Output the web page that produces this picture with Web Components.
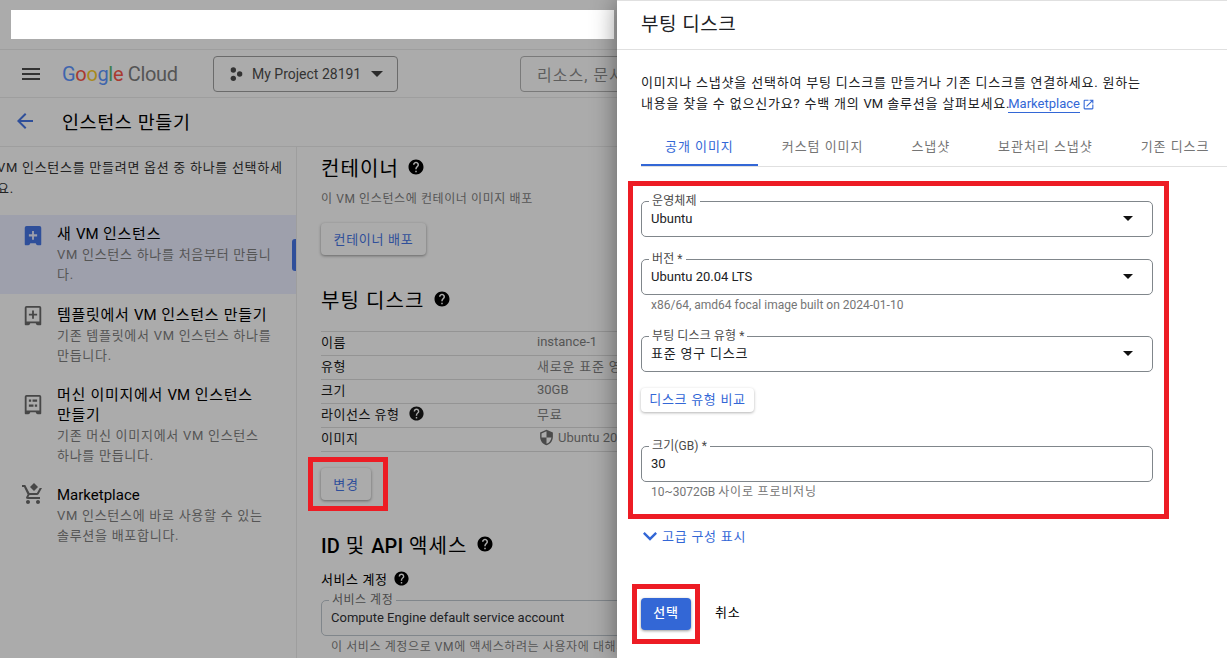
<!DOCTYPE html>
<html lang="ko">
<head>
<meta charset="utf-8">
<title>부팅 디스크</title>
<style>
  html, body { margin: 0; height: 100%; }
  body {
    width: 1227px;
    height: 658px;
    overflow: hidden;
    position: relative;
    display: flex;
    font-family: Roboto, "Noto Sans CJK KR", sans-serif;
    font-size: 13px;
    color: #000;
    background: #ababab;
  }
  /* latin runs keep their natural width, hangul needs a bit of tracking */
  .l { letter-spacing: 0; }
  .b { letter-spacing: 0; font-weight: 500; }
  .ko { letter-spacing: .8px; }
</style>
</head>
<body>

<gc-console>
  <gc-nav-item slot="nav" icon="vm" selected style="--it:2px">
    <span slot="title">새 <span class="l">VM</span> 인스턴스</span>
    VM 인스턴스 하나를 처음부터 만듭니<br>다.
  </gc-nav-item>
  <gc-nav-item slot="nav" icon="template" style="--it:1px">
    <span slot="title">템플릿에서 <span class="l">VM</span> 인스턴스 만들기</span>
    기존 템플릿에서 VM 인스턴스 하나를<br>만듭니다.
  </gc-nav-item>
  <gc-nav-item slot="nav" icon="image" style="--it:10px">
    <span slot="title">머신 이미지에서 <span class="l">VM</span> 인스턴스<br>만들기</span>
    기존 머신 이미지에서 VM 인스턴스<br>하나를 만듭니다.
  </gc-nav-item>
  <gc-nav-item slot="nav" icon="cart" style="--it:-2px">
    <span slot="title"><span class="l">Marketplace</span></span>
    VM 인스턴스에 바로 사용할 수 있는<br>솔루션을 배포합니다.
  </gc-nav-item>

  <gc-heading>컨테이너</gc-heading>
  <gc-note>이 VM 인스턴스에 컨테이너 이미지 배포</gc-note>
  <gc-button style="margin-top:14px;--w:105px">컨테이너 배포</gc-button>

  <gc-heading style="margin-top:30px">부팅 디스크</gc-heading>
  <gc-table style="margin-top:16px">
    <gc-row label="이름">instance-1</gc-row>
    <gc-row label="유형"><span class="ko">새로운 표준 영구 디스크</span></gc-row>
    <gc-row label="크기">30GB</gc-row>
    <gc-row label="라이선스 유형" help><span class="ko">무료</span></gc-row>
    <gc-row label="이미지"><gc-icon name="shield" size="17" style="color:#4a4a4a;margin:0 3px 0 1px"></gc-icon>Ubuntu 20.04 LTS</gc-row>
  </gc-table>
  <gc-button style="margin-top:16px;--w:50px">변경</gc-button>

  <gc-heading style="margin-top:30px"><span class="b">ID</span> 및 <span class="b">API</span> 액세스</gc-heading>
  <gc-label style="margin-top:9px">서비스 계정</gc-label>
  <gc-field style="margin-top:11px;width:420px;--notch:#ababab;--ls:.5px" label="서비스 계정" value="Compute Engine default service account"></gc-field>
  <gc-hint dim>이 서비스 계정으로 VM에 액세스하려는 사용자에 대해서는<br>이 권한 설정</gc-hint>
</gc-console>

<disk-panel>
  <span slot="title">부팅 디스크</span>

  이미지나 스냅샷을 선택하여 부팅 디스크를 만들거나 기존 디스크를 연결하세요. 원하는<br>
  내용을 찾을 수 없으신가요? 수백 개의 <span class="l">VM</span> 솔루션을 살펴보세요.<gc-link>Marketplace</gc-link>

  <gc-tab slot="tabs" active>공개 이미지</gc-tab>
  <gc-tab slot="tabs">커스텀 이미지</gc-tab>
  <gc-tab slot="tabs">스냅샷</gc-tab>
  <gc-tab slot="tabs">보관처리 스냅샷</gc-tab>
  <gc-tab slot="tabs">기존 디스크</gc-tab>

  <gc-field slot="form" style="margin-top:34px" label="운영체제" value="Ubuntu" select></gc-field>
  <gc-field slot="form" style="margin-top:22px" label="버전 *" value="Ubuntu 20.04 LTS" select></gc-field>
  <gc-hint slot="form">x86/64, amd64 focal image built on 2024-01-10</gc-hint>
  <gc-field slot="form" style="margin-top:21px;--vs:.8px;--vb:3px" label="부팅 디스크 유형 *" value="표준 영구 디스크" select></gc-field>
  <gc-button slot="form" light style="margin-top:16px;--w:113px;--h:24px">디스크 유형 비교</gc-button>
  <gc-field slot="form" style="margin-top:34px" label="크기(GB) *" value="30"></gc-field>
  <gc-hint slot="form">10~3072GB <span class="ko">사이로 프로비저닝</span></gc-hint>

  <gc-expander slot="form">고급 구성 표시</gc-expander>

  <gc-button slot="actions" primary style="--w:50px">선택</gc-button>
  <span slot="actions" class="ko" style="padding-bottom:5px">취소</span>
</disk-panel>

<red-box style="left:628px;top:181px;width:541px;height:338px"></red-box>
<red-box style="left:632px;top:584px;width:68px;height:60px"></red-box>
<red-box style="left:308px;top:457px;width:80px;height:54px"></red-box>

<script>
  const ICONS = {
    menu: '<path d="M3 18h18v-2H3v2zm0-5h18v-2H3v2zm0-7v2h18V6H3z"/>',
    back: '<path d="M20 11H7.83l5.59-5.59L12 4l-8 8 8 8 1.41-1.41L7.83 13H20v-2z"/>',
    help: '<path d="M12 2C6.48 2 2 6.48 2 12s4.48 10 10 10 10-4.48 10-10S17.52 2 12 2zm1 17h-2v-2h2v2zm2.07-7.75l-.9.92C13.45 12.9 13 13.5 13 15h-2v-.5c0-1.1.45-2.1 1.17-2.83l1.24-1.26c.37-.36.59-.86.59-1.41 0-1.1-.9-2-2-2s-2 .9-2 2H8c0-2.21 1.79-4 4-4s4 1.79 4 4c0 .88-.36 1.68-.93 2.25z"/>',
    shield: '<path d="M12 1L3 5v6c0 5.55 3.84 10.74 9 12 5.16-1.26 9-6.45 9-12V5l-9-4zm0 10.99h7c-.53 4.12-3.28 7.79-7 8.94V12H5V6.3l7-3.11v8.8z"/>',
    open: '<path d="M19 19H5V5h7V3H5a2 2 0 0 0-2 2v14a2 2 0 0 0 2 2h14c1.1 0 2-.9 2-2v-7h-2v7zM14 3v2h3.59l-9.83 9.83 1.41 1.41L19 6.41V10h2V3h-7z"/>',
    chevron: '<path d="M7.41 8.59L12 13.17l4.59-4.58L18 10l-6 6-6-6z"/>',
    project: '<circle cx="8" cy="6" r="4"/><circle cx="17.5" cy="12" r="4"/><circle cx="8" cy="18.500" r="4"/>',
    vm: '<path fill-rule="evenodd" d="M5 1h14a2 2 0 0 1 2 2v18a1 1 0 0 1-1 1h-3a2 2 0 0 1-2-2H9a2 2 0 0 1-2 2H4a1 1 0 0 1-1-1V3a2 2 0 0 1 2-2zm6 5.500v3.500H7.500v2.500H11V16h2v-3.500h3.500V10H13V6.500z"/>',
    template: '<path fill-rule="evenodd" d="M5 1h14a2 2 0 0 1 2 2v18a1 1 0 0 1-1 1h-3a2 2 0 0 1-2-2H9a2 2 0 0 1-2 2H4a1 1 0 0 1-1-1V3a2 2 0 0 1 2-2zm0 2v15h14V3zm6 3h2v3.500h3.500v2H13V15h-2v-3.500H7.500v-2H11z"/>',
    image: '<path fill-rule="evenodd" d="M5 1h14a2 2 0 0 1 2 2v18a1 1 0 0 1-1 1h-3a2 2 0 0 1-2-2H9a2 2 0 0 1-2 2H4a1 1 0 0 1-1-1V3a2 2 0 0 1 2-2zm0 2v15h14V3zm2.500 3H10v2.500H7.500zm4 0h5v2.500h-5zm-4 5.500h5V14h-5zm6.500 0h2.500V14H14z"/>',
    cart: '<path d="M7 18c-1.100 0-1.990.9-1.990 2S5.900 22 7 22s2-.9 2-2-.9-2-2-2zm10 0c-1.100 0-1.990.9-1.990 2s.89 2 1.990 2 2-.9 2-2-.9-2-2-2zM1 3v2h2l3.600 7.590-1.350 2.440C4.520 16.370 5.480 17 7 17h12v-2H7.400l1.100-2h7.450c.75 0 1.410-.41 1.750-1.030L21 6h-2.300l-2.750 5H8.500L4.270 3z"/><path d="M13 1l4 4-4 4-4-4z"/>'
  };

  class GcIcon extends HTMLElement {
    constructor() {
      super();
      const size = this.getAttribute("size") || 24;
      this.attachShadow({ mode: "open" }).innerHTML = `
        <style>
          :host { display: inline-flex; flex: none; vertical-align: middle; }
          svg { display: block; fill: currentColor; }
        </style>
        <svg width="${size}" height="${size}" viewBox="0 0 24 24">${ICONS[this.getAttribute("name")] || ""}</svg>`;
    }
  }
  customElements.define("gc-icon", GcIcon);

  class GcConsole extends HTMLElement {
    constructor() {
      super();
      this.attachShadow({ mode: "open" }).innerHTML = `
        <style>
          :host { display: flex; flex-direction: column; width: 617px; height: 658px; overflow: hidden; flex: none; }
          .strip { flex: none; height: 39px; border-bottom: 1px solid #9e9e9e; padding: 10px 0 0 11px; }
          .strip div { width: 603px; height: 29px; background: #fff; }
          .bar { height: 47px; flex: none; display: flex; align-items: center; border-bottom: 1px solid #9e9e9e; white-space: nowrap; }
          .menu { margin-left: 19px; color: #333; }
          .logo { margin-left: 19px; width: 116px; flex: none; font-size: 20px; letter-spacing: -.33px; color: #555; }
          .project {
            margin-left: 35px; width: 185px; height: 36px; box-sizing: border-box; flex: none;
            border: 1px solid #6b6b6b; border-radius: 4px; display: flex; align-items: center;
            padding-left: 14px; font-size: 14px; color: #333;
          }
          .project span { margin-left: 8px; width: 119px; flex: none; }
          .arrow { width: 0; height: 0; border: 6px solid transparent; border-top-color: #2b2b2b; border-bottom: 0; }
          .search {
            margin-left: 122px; width: 500px; height: 36px; box-sizing: border-box; flex: none;
            border: 1px solid #7a7a7a; border-radius: 4px; padding-left: 16px;
            display: flex; align-items: center; font-size: 16px; letter-spacing: 1px; color: #5e5e5e;
          }
          .title { flex: none; display: flex; align-items: center; border-bottom: 1px solid #9e9e9e; box-sizing: border-box; height: 49px; padding-bottom: 3px; font-size: 18.5px; letter-spacing: .6px; white-space: nowrap; }
          .title gc-icon { margin: 0 25px 0 13px; color: #2f4f9a; }
          .cols { flex: 1; display: flex; min-height: 0; }
          .side { width: 296px; flex: none; border-right: 1px solid #9e9e9e; overflow: hidden; }
          .intro { margin: 10px 0 16px -3px; line-height: 21px; letter-spacing: .72px; color: #222; white-space: nowrap; }
          .main { padding: 6px 0 0 24px; width: 500px; flex: none; }
        </style>
        <div class="strip"><div></div></div>
        <div class="bar">
          <gc-icon class="menu" name="menu" size="24"></gc-icon>
          <div class="logo"><span style="color:#3f65ad">G</span><span style="color:#a93a30">o</span><span style="color:#a8891c">o</span><span style="color:#3f65ad">g</span><span style="color:#3d7d4a">l</span><span style="color:#a93a30">e</span> Cloud</div>
          <div class="project"><gc-icon name="project" size="16"></gc-icon><span>My Project 28191</span><div class="arrow"></div></div>
          <div class="search">리소스, 문서, 제품 등 검색</div>
        </div>
        <div class="title"><gc-icon name="back" size="24"></gc-icon>인스턴스 만들기</div>
        <div class="cols">
          <div class="side">
            <div class="intro">VM 인스턴스를 만들려면 옵션 중 하나를 선택하세<br>요.</div>
            <slot name="nav"></slot>
          </div>
          <div class="main"><slot></slot></div>
        </div>`;
    }
  }
  customElements.define("gc-console", GcConsole);

  class GcNavItem extends HTMLElement {
    constructor() {
      super();
      const selected = this.hasAttribute("selected");
      this.attachShadow({ mode: "open" }).innerHTML = `
        <style>
          :host { display: flex; position: relative; padding: 10px 0 8px 22px; white-space: nowrap; }
          :host([selected]) { padding: 8px 0 9px 22px; background: #9ea0ac; }
          .icon { width: 22px; margin-right: 13px; padding-top: var(--it, 0); color: #474747; }
          :host([icon="cart"]) .icon { margin-left: -1px; width: 24px; margin-right: 12px; padding-top: 0; margin-top: var(--it, 0); }
          :host([selected]) .icon { color: #2f4f9a; }
          .title { font-size: 15px; line-height: 20px; letter-spacing: .72px; padding-top: 1px; }
          .desc { margin-top: 1px; line-height: 20px; letter-spacing: .72px; color: #555; }
          .mark { position: absolute; right: 0; top: 24px; width: 4px; height: 32px; background: #2f4f9a; border-radius: 3px 0 0 3px; }
        </style>
        <div class="icon"><gc-icon name="${this.getAttribute("icon")}" size="${this.getAttribute("icon") == "cart" ? 24 : 22}"></gc-icon></div>
        <div>
          <div class="title"><slot name="title"></slot></div>
          <div class="desc"><slot></slot></div>
        </div>
        ${selected ? '<div class="mark"></div>' : ""}`;
    }
  }
  customElements.define("gc-nav-item", GcNavItem);

  class GcHeading extends HTMLElement {
    constructor() {
      super();
      this.attachShadow({ mode: "open" }).innerHTML = `
        <style>
          :host { display: flex; align-items: center; box-sizing: border-box; height: 30px; padding-bottom: 2px; font-size: 20px; letter-spacing: 1.1px; white-space: pre; }
          gc-icon { margin-left: 8px; }
        </style>
        <div><slot></slot></div><gc-icon name="help" size="18"></gc-icon>`;
    }
  }
  customElements.define("gc-heading", GcHeading);

  class GcNote extends HTMLElement {
    constructor() {
      super();
      this.attachShadow({ mode: "open" }).innerHTML = `
        <style>:host { display: block; margin-top: 6px; height: 20px; line-height: 20px; font-size: 12px; letter-spacing: .6px; color: #555; white-space: nowrap; }</style>
        <slot></slot>`;
    }
  }
  customElements.define("gc-note", GcNote);

  class GcLabel extends HTMLElement {
    constructor() {
      super();
      this.attachShadow({ mode: "open" }).innerHTML = `
        <style>
          :host { display: flex; align-items: center; box-sizing: border-box; height: 20px; padding-bottom: 2px; font-size: 13px; letter-spacing: .6px; }
          gc-icon { margin-left: 5px; }
        </style>
        <slot></slot><gc-icon name="help" size="17"></gc-icon>`;
    }
  }
  customElements.define("gc-label", GcLabel);

  class GcButton extends HTMLElement {
    constructor() {
      super();
      this.attachShadow({ mode: "open" }).innerHTML = `
        <style>
          :host {
            display: flex; align-items: center; justify-content: center; box-sizing: border-box;
            width: var(--w, 60px); height: var(--h, 32px); padding-bottom: 2px; border-radius: 4px;
            background: #ababab; color: #2f4f9a; font-size: 13px; letter-spacing: .7px; white-space: nowrap;
            box-shadow: 0 1px 3px rgba(0,0,0,.4);
          }
          :host([light]) { background: #fff; color: #3367d6; padding-bottom: 3px; box-shadow: 0 1px 3px rgba(0,0,0,.3); }
          :host([primary]) { background: #3367d6; color: #fff; padding-bottom: 6px; font-weight: 500; box-shadow: 0 1px 3px rgba(0,0,0,.4); }
        </style>
        <slot></slot>`;
    }
  }
  customElements.define("gc-button", GcButton);

  class GcTable extends HTMLElement {
    constructor() {
      super();
      this.attachShadow({ mode: "open" }).innerHTML = `
        <style>:host { display: block; width: 500px; border-bottom: 1px solid #949494; }</style>
        <slot></slot>`;
    }
  }
  customElements.define("gc-table", GcTable);

  class GcRow extends HTMLElement {
    constructor() {
      super();
      const help = this.hasAttribute("help") ? '<gc-icon name="help" size="17"></gc-icon>' : "";
      this.attachShadow({ mode: "open" }).innerHTML = `
        <style>
          :host { display: grid; grid-template-columns: 216px 1fr; box-sizing: border-box; height: 24px; padding-bottom: 4px; border-top: 1px solid #949494; white-space: nowrap; }
          .k, .v { display: flex; align-items: center; }
          .k { color: #111; letter-spacing: .5px; }
          .k gc-icon { margin-left: 8px; }
          .v { color: #555; }
        </style>
        <div class="k">${this.getAttribute("label")}${help}</div>
        <div class="v"><slot></slot></div>`;
    }
  }
  customElements.define("gc-row", GcRow);

  class GcField extends HTMLElement {
    constructor() {
      super();
      const arrow = this.hasAttribute("select") ? '<div class="arrow"></div>' : "";
      this.attachShadow({ mode: "open" }).innerHTML = `
        <style>
          :host {
            display: flex; align-items: center; position: relative; box-sizing: border-box;
            height: 36px; border: 1px solid #80868b; border-radius: 5px; padding: 0 19px 1px 9px;
            font-size: 13px; color: #202124; white-space: nowrap;
          }
          .label {
            position: absolute; left: 7px; top: -9px; padding: 0 3px; background: var(--notch, #fff);
            font-size: 12px; line-height: 16px; letter-spacing: var(--ls, .1px); color: #4a4a4a;
          }
          .value { flex: 1; letter-spacing: var(--vs, 0); padding-bottom: var(--vb, 0); }
          .arrow { width: 0; height: 0; border: 5.5px solid transparent; border-top-color: #111; border-bottom: 0; }
        </style>
        <div class="label">${this.getAttribute("label")}</div>
        <div class="value">${this.getAttribute("value")}</div>
        ${arrow}`;
    }
  }
  customElements.define("gc-field", GcField);

  class GcHint extends HTMLElement {
    constructor() {
      super();
      this.attachShadow({ mode: "open" }).innerHTML = `
        <style>
          :host { display: block; padding-left: 10px; line-height: 20px; font-size: 12px; color: #757575; white-space: nowrap; }
          :host([dim]) { margin-top: 1px; letter-spacing: .6px; color: #555; }
        </style>
        <slot></slot>`;
    }
  }
  customElements.define("gc-hint", GcHint);

  class GcLink extends HTMLElement {
    constructor() {
      super();
      this.attachShadow({ mode: "open" }).innerHTML = `
        <style>
          :host { display: inline-flex; align-items: center; margin-left: -2px; color: #3367d6; letter-spacing: 0; }
          span { border-bottom: 1px solid #3367d6; line-height: 17px; }
          gc-icon { margin-left: 2px; }
        </style>
        <span><slot></slot></span><gc-icon name="open" size="13"></gc-icon>`;
    }
  }
  customElements.define("gc-link", GcLink);

  class GcTab extends HTMLElement {
    constructor() {
      super();
      this.attachShadow({ mode: "open" }).innerHTML = `
        <style>
          :host { display: flex; align-items: center; flex: none; box-sizing: border-box; padding: 2px 24px 0; height: 41px; border-bottom: 2px solid transparent; color: #757575; letter-spacing: .95px; white-space: nowrap; }
          :host([active]) { color: #3367d6; border-bottom-color: #3367d6; }
        </style>
        <slot></slot>`;
    }
  }
  customElements.define("gc-tab", GcTab);

  class GcExpander extends HTMLElement {
    constructor() {
      super();
      this.attachShadow({ mode: "open" }).innerHTML = `
        <style>
          :host { display: flex; align-items: center; margin-top: 23px; height: 20px; color: #3367d6; letter-spacing: .75px; white-space: nowrap; }
          gc-icon { margin: 1px -2px 0 -5px; }
        </style>
        <gc-icon name="chevron" size="28"></gc-icon><slot></slot>`;
    }
  }
  customElements.define("gc-expander", GcExpander);

  class DiskPanel extends HTMLElement {
    constructor() {
      super();
      this.attachShadow({ mode: "open" }).innerHTML = `
        <style>
          :host { display: flex; flex-direction: column; flex: 1; min-width: 0; position: relative; background: #fff; box-shadow: 0 0 24px rgba(0,0,0,.45); overflow: hidden; clip-path: inset(0 0 0 -40px); }
          .head { height: 50px; box-sizing: border-box; flex: none; border-top: 1px solid #e0e0e0; border-bottom: 1px solid #e0e0e0; padding: 0 0 5px 24px; display: flex; align-items: center; font-size: 19px; letter-spacing: .5px; color: #202124; }
          .body { padding: 0 24px; }
          .intro { margin-top: 22px; line-height: 21px; letter-spacing: .8px; color: #202124; white-space: nowrap; }
          .tabs { display: flex; margin: 11px -24px 0 0; border-bottom: 1px solid #e0e0e0; overflow: hidden; height: 41px; }
          .form { display: block; width: 512px; }
          .actions { display: flex; align-items: center; gap: 24px; margin-top: 53px; }
        </style>
        <div class="head"><slot name="title"></slot></div>
        <div class="body">
          <div class="intro"><slot></slot></div>
          <div class="tabs"><slot name="tabs"></slot></div>
          <div class="form"><slot name="form"></slot></div>
          <div class="actions"><slot name="actions"></slot></div>
        </div>`;
    }
  }
  customElements.define("disk-panel", DiskPanel);

  class RedBox extends HTMLElement {
    constructor() {
      super();
      this.attachShadow({ mode: "open" }).innerHTML = `
        <style>:host { display: block; position: absolute; box-sizing: border-box; border: 5px solid #ed1c24; pointer-events: none; }</style>`;
    }
  }
  customElements.define("red-box", RedBox);
</script>
</body>
</html>
